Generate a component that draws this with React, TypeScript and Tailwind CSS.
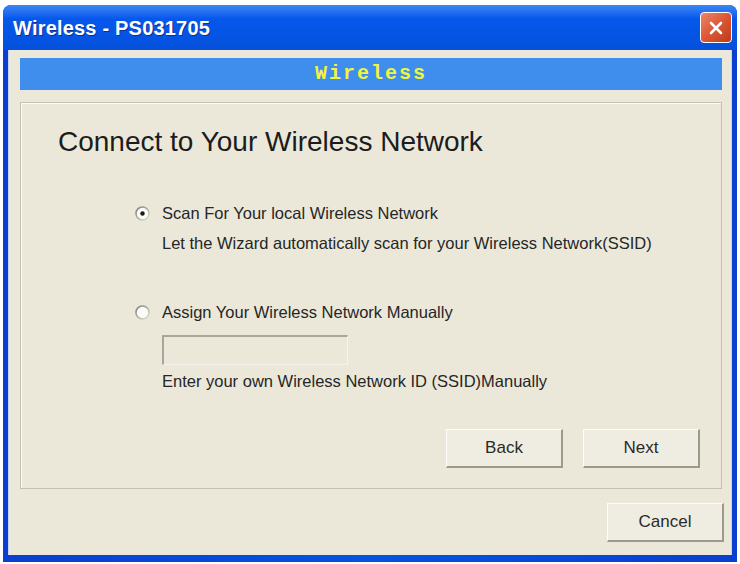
import React from "react";

function Radio({ checked }: { checked?: boolean }) {
  return (
    <svg width="15" height="15" viewBox="0 0 15 15" className="shrink-0">
      <defs>
        <linearGradient id={checked ? "rg1" : "rg2"} x1="0" y1="0" x2="1" y2="1">
          <stop offset="0" stopColor="#7d7d76" />
          <stop offset="1" stopColor="#e4e2d6" />
        </linearGradient>
      </defs>
      <circle cx="7.5" cy="7.5" r="6.5" fill="#fbfbf8" stroke={`url(#${checked ? "rg1" : "rg2"})`} strokeWidth="1.6" />
      {checked && <circle cx="7.5" cy="7.5" r="2.2" fill="#1a1a1a" />}
    </svg>
  );
}

function XpButton({ label, className = "" }: { label: string; className?: string }) {
  return (
    <button
      className={`flex h-[39px] w-[117px] items-center justify-center border border-t-[#fdfdfa] border-l-[#fdfdfa] border-r-[2px] border-b-[2px] border-r-[#9c9a8c] border-b-[#9c9a8c] bg-[#efede2] text-[17px] text-[#2a2a2a] ${className}`}
    >
      {label}
    </button>
  );
}

export default function App() {
  return (
    <div className="h-[564px] w-[740px] bg-white px-[3px] pt-[5px] pb-[2px] font-['Liberation_Sans',Arial,sans-serif]">
      <div className="flex h-full flex-col rounded-t-[8px] bg-gradient-to-r from-[#0a3fcf] via-[#0553e1] to-[#0a3fcf]">
        {/* title bar */}
        <div className="flex h-[45px] items-center justify-between rounded-t-[8px] bg-gradient-to-b from-[#3d86f3] via-[#0658ec] via-30% to-[#0450dc] pl-[10px] pr-[5px]">
          <span className="text-[20px] font-bold tracking-[0.2px] text-white [text-shadow:1px_1px_0_#0a2f9a]">
            Wireless - PS031705
          </span>
          <div className="flex h-[31px] w-[32px] items-center justify-center rounded-[4px] border border-white bg-gradient-to-br from-[#ec8466] via-[#dc5634] to-[#b93b1c]">
            <svg width="16" height="16" viewBox="0 0 16 16">
              <path d="M3 3 L13 13 M13 3 L3 13" stroke="#fff" strokeWidth="2.6" strokeLinecap="round" />
            </svg>
          </div>
        </div>

        {/* body */}
        <div className="mx-[5px] mb-[7px] flex flex-1 flex-col border-l border-r border-[#c7d6f5] bg-[#ebe8d9] pt-[8px] pl-[11px] pr-[9px]">
          <div className="flex h-[32px] items-center justify-center bg-[#3f8eee]">
            <span className="font-['Liberation_Mono',monospace] text-[20px] font-bold tracking-[2px] text-[#f2f53a]">
              Wireless
            </span>
          </div>

          <div className="mt-[12px] h-[387px] border border-[#c4c1b2] shadow-[inset_1px_1px_0_#fbfaf3] pl-[37px]">
            <h1 className="mt-[24px] text-[28px] leading-[30px] text-[#1c1c1c]">Connect to Your Wireless Network</h1>

            <div className="ml-[104px] mt-[46px] flex flex-col text-[16.5px] text-[#262626]">
              <div className="flex items-center gap-[12px] h-[20px] -ml-[27px]">
                <Radio checked />
                <span>Scan For Your local Wireless Network</span>
              </div>
              <div className="mt-[10px] leading-[20px]">
                Let the Wizard automatically scan for your Wireless Network(SSID)
              </div>

              <div className="mt-[49px] flex items-center gap-[12px] h-[20px] -ml-[27px]">
                <Radio />
                <span>Assign Your Wireless Network Manually</span>
              </div>
              <div className="mt-[13px] h-[30px] w-[186px] border-t-2 border-l-2 border-b border-r border-t-[#a8a69a] border-l-[#a8a69a] border-b-[#f4f3ec] border-r-[#f4f3ec] bg-[#ebe8d9]" />
              <div className="mt-[6px] leading-[20px]">Enter your own Wireless Network ID (SSID)Manually</div>

              <div className="mt-[38px] mr-[21px] flex justify-end gap-[20px]">
                <XpButton label="Back" />
                <XpButton label="Next" />
              </div>
            </div>
          </div>

          <div className="mt-[14px] flex justify-end">
            <XpButton label="Cancel" className="mr-[-2px]" />
          </div>
        </div>
      </div>
    </div>
  );
}
